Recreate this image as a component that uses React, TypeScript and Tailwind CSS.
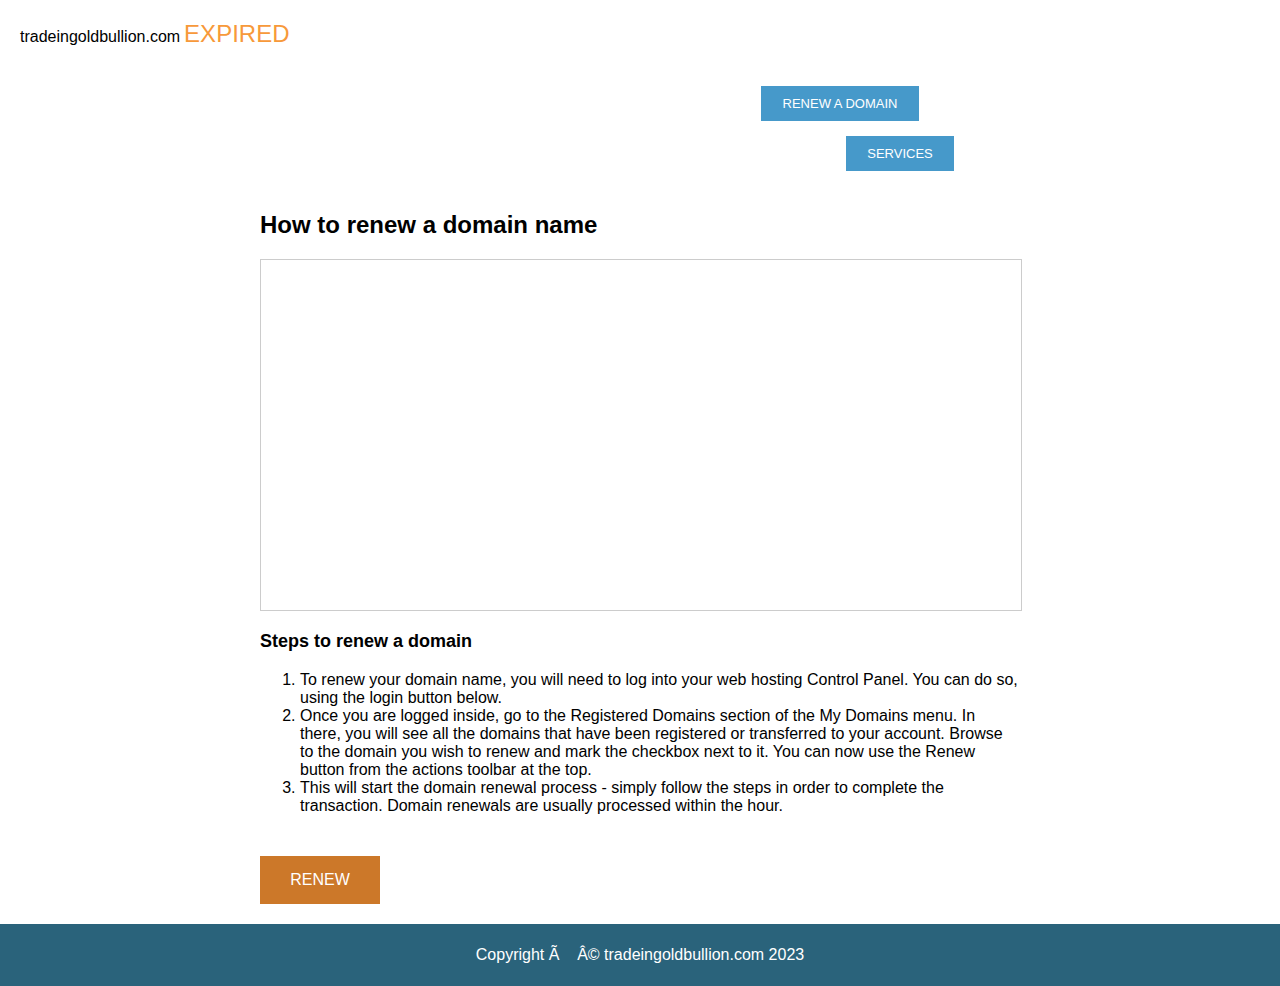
const steps = [
  "To renew your domain name, you will need to log into your web hosting Control Panel. You can do so, using the login button below.",
  "Once you are logged inside, go to the Registered Domains section of the My Domains menu. In there, you will see all the domains that have been registered or transferred to your account. Browse to the domain you wish to renew and mark the checkbox next to it. You can now use the Renew button from the actions toolbar at the top.",
  "This will start the domain renewal process - simply follow the steps in order to complete the transaction. Domain renewals are usually processed within the hour.",
];

export default function App() {
  return (
    <div className="min-h-[986px] flex flex-col bg-white text-black font-['Liberation_Sans',Arial,sans-serif]">
      <header className="px-5 pt-[16px] flex items-baseline gap-1">
        <span className="text-base">tradeingoldbullion.com</span>
        <span className="text-[24px] text-[#f7993a]">EXPIRED</span>
      </header>

      <nav className="flex flex-col items-start mt-[34px]">
        <a className="ml-[761px] w-[158px] h-[35px] flex items-center justify-center bg-[#4699ca] text-white text-[13px]">
          RENEW A DOMAIN
        </a>
        <a className="ml-[846px] mt-[15px] w-[108px] h-[35px] flex items-center justify-center bg-[#4699ca] text-white text-[13px]">
          SERVICES
        </a>
      </nav>

      <main className="w-[762px] ml-[260px] mt-[40px] flex-1">
        <h1 className="text-[24px] font-bold leading-[28px]">How to renew a domain name</h1>
        <div className="mt-[20px] h-[352px] border border-[#cccccc]" />
        <h3 className="mt-[20px] text-[18px] font-bold leading-[21px]">Steps to renew a domain</h3>
        <ol className="mt-[19px] list-decimal pl-10 pr-[4px] text-base leading-[18px]">
          {steps.map((s, i) => (
            <li key={i}>{s}</li>
          ))}
        </ol>
        <button className="mt-[41px] w-[120px] h-[48px] bg-[#cc7829] text-white text-base">
          RENEW
        </button>
      </main>

      <footer className="mt-5 h-[62px] bg-[#2a637b] text-white text-base flex items-center justify-center">
        Copyright Ã&nbsp;&nbsp;&nbsp; Â© tradeingoldbullion.com 2023
      </footer>
    </div>
  );
}
